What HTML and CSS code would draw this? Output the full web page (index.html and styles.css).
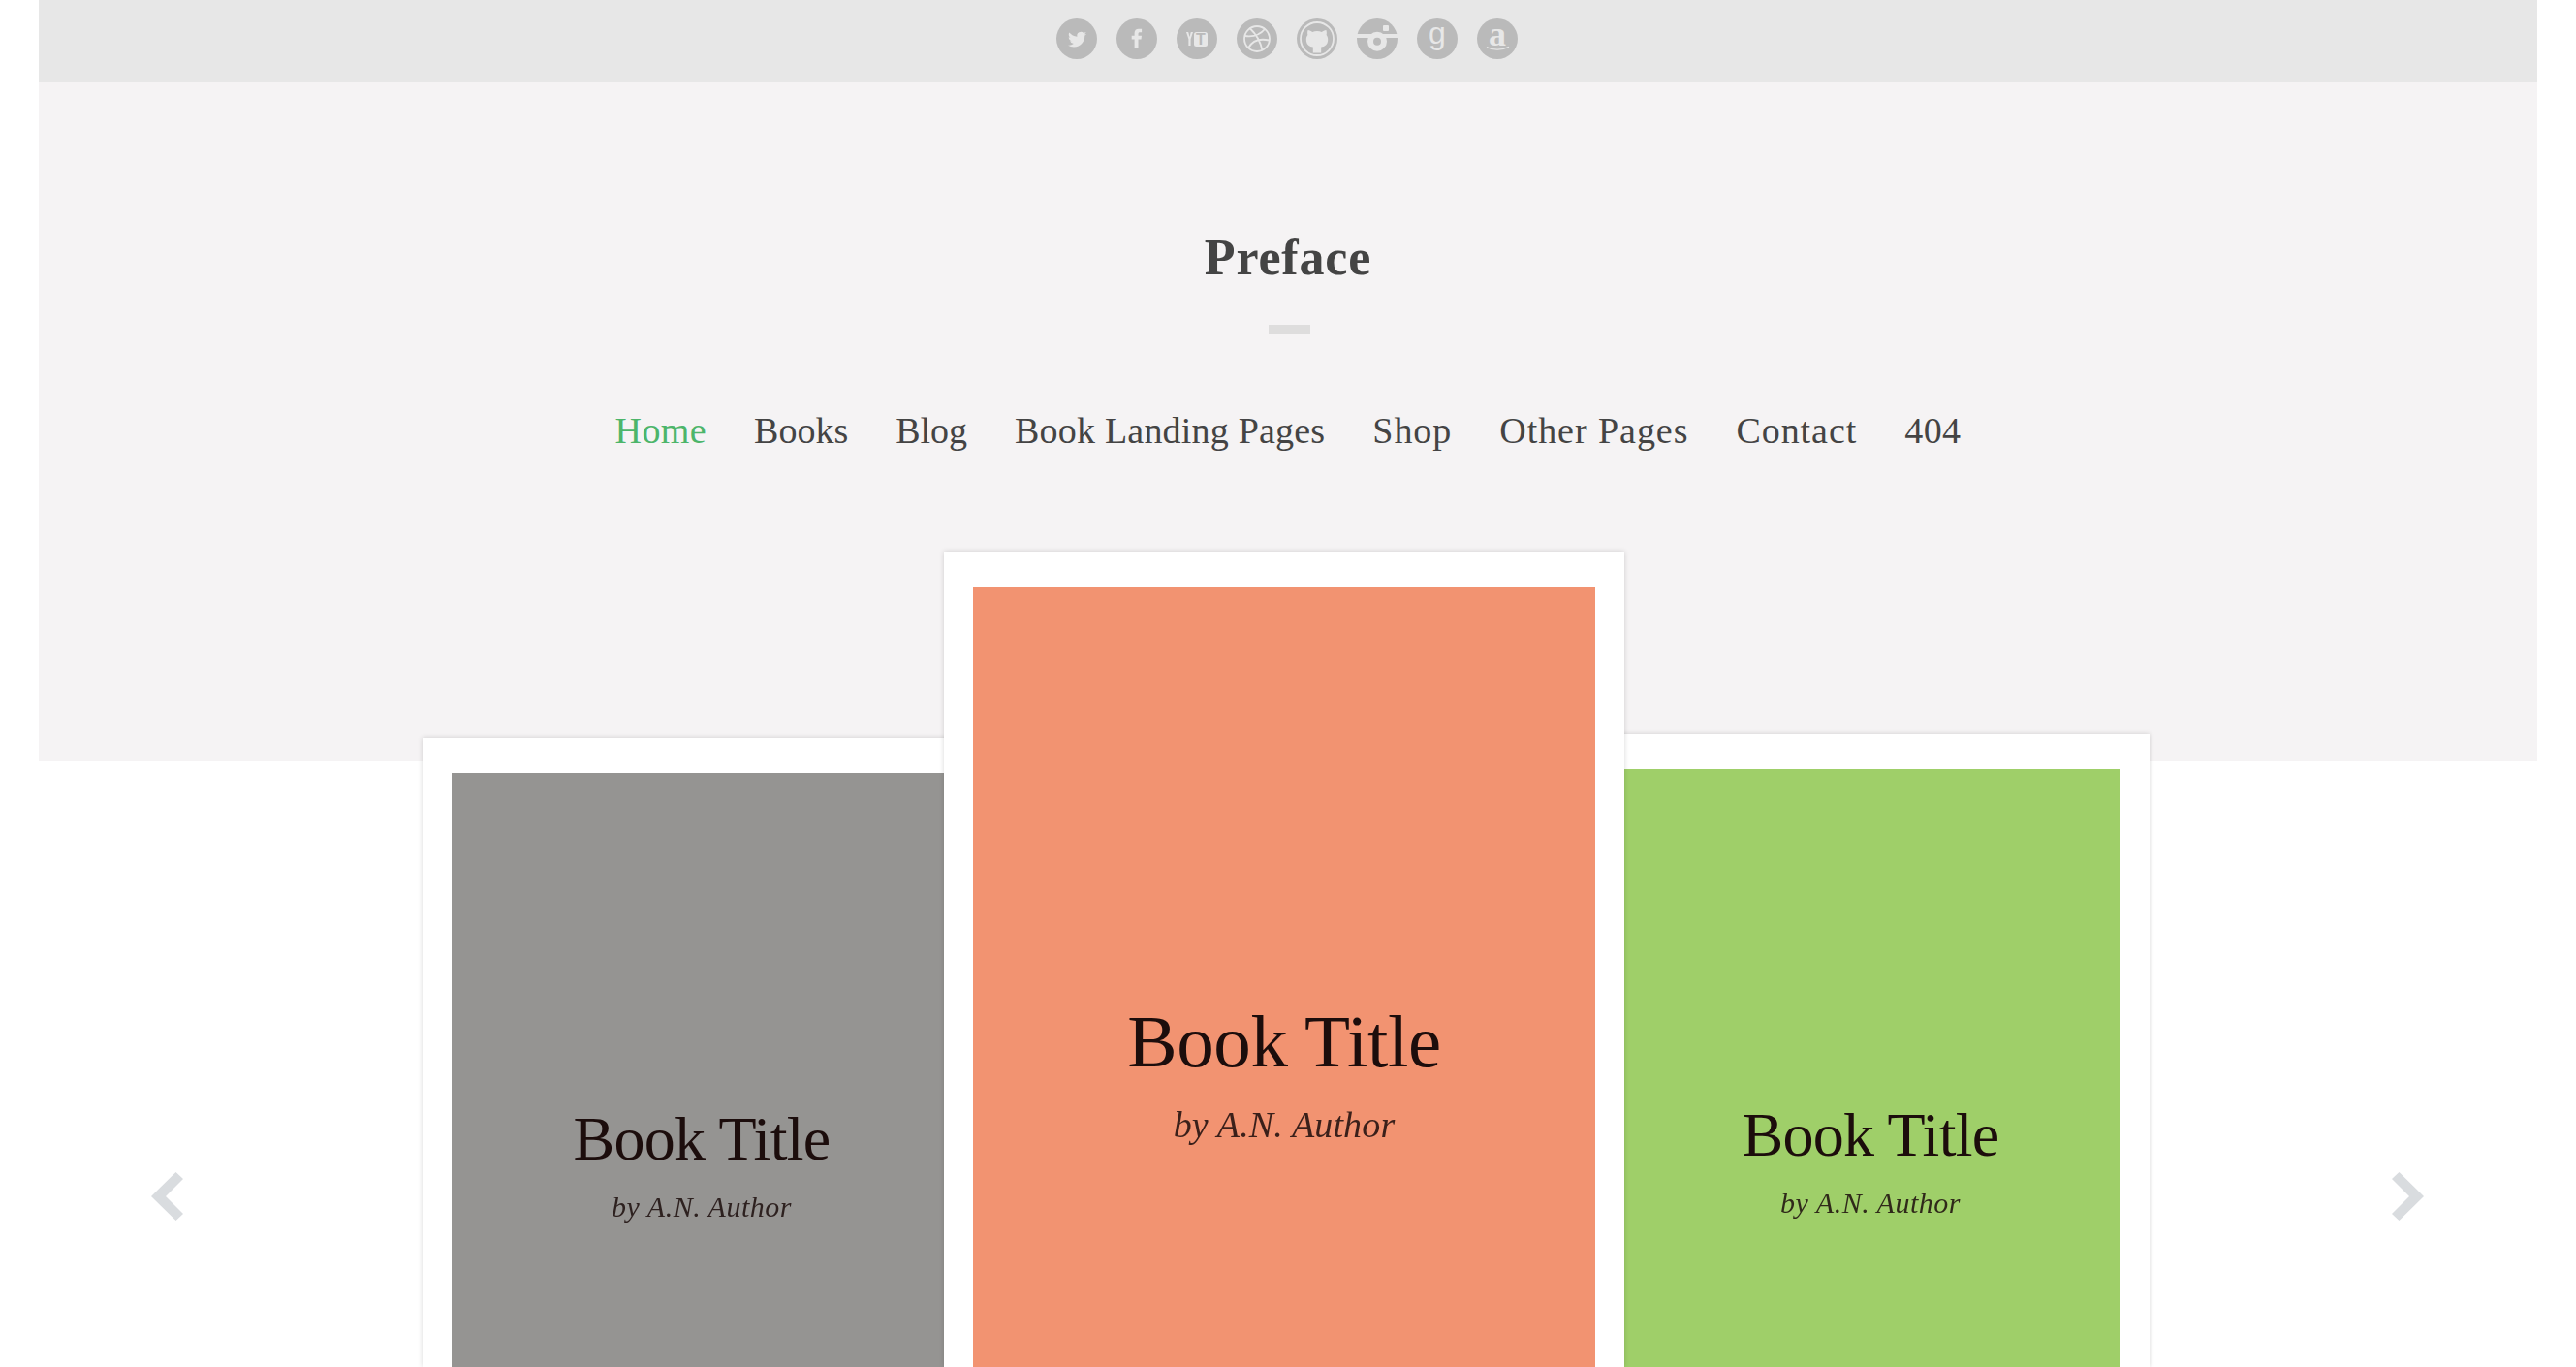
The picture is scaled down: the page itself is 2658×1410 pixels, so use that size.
FILE: index.html
```html
<!DOCTYPE html>
<html lang="en">
<head>
<meta charset="utf-8">
<title>Preface</title>
<link rel="stylesheet" href="styles.css">
</head>
<body>
<div class="shell">
  <div class="topbar">
    <svg class="social" viewBox="0 0 42 42"><circle class="disc" cx="21" cy="21" r="21"/><path class="mark" transform="translate(12 12) scale(.8)" d="M23.953 4.57a10 10 0 01-2.825.775 4.958 4.958 0 002.163-2.723c-.951.555-2.005.959-3.127 1.184a4.92 4.92 0 00-8.384 4.482C7.69 8.095 4.067 6.13 1.64 3.162a4.822 4.822 0 00-.666 2.475c0 1.71.87 3.213 2.188 4.096a4.904 4.904 0 01-2.228-.616v.06a4.923 4.923 0 003.946 4.827 4.996 4.996 0 01-2.212.085 4.936 4.936 0 004.604 3.417 9.867 9.867 0 01-6.102 2.105c-.39 0-.779-.023-1.17-.067a13.995 13.995 0 007.557 2.209c9.053 0 13.998-7.496 13.998-13.985 0-.21 0-.42-.015-.63A9.935 9.935 0 0024 4.59z"/></svg>
    <svg class="social" viewBox="0 0 42 42"><circle class="disc" cx="21" cy="21" r="21"/><path class="mark" d="M18.600 31v-9.400H15.700v-3.800h2.900v-2.700c0-3 1.700-4.400 4.300-4.400h3.200v3.600h-1.900c-1.300 0-1.700.6-1.700 1.600v1.900h3.500l-.5 3.800h-3v9.400z"/></svg>
    <svg class="social" viewBox="0 0 42 42"><circle class="disc" cx="21" cy="21" r="21"/><path class="mark" d="M10 14h2.200l1.300 5 1.300-5H17l-2.400 7.300V28h-2.200v-6.700z"/><rect class="mark" x="18" y="14" width="14" height="15" rx="2.500"/><text class="yt-t" x="25" y="27">T</text></svg>
    <svg class="social" viewBox="0 0 42 42"><circle class="disc" cx="21" cy="21" r="21"/><g class="line"><circle cx="21" cy="21" r="13"/><path d="M14 10.500c5 4.500 10 11 12.500 22.500M8.500 18c8 1.200 15-.3 21-7.500M12 30.500c3.500-6.500 10-10.500 21.500-8"/></g></svg>
    <svg class="social" viewBox="0 0 42 42"><circle class="disc" cx="21" cy="21" r="21"/><circle class="ring" cx="21" cy="21" r="17"/><path class="mark" d="M16.800 35.500v-5.900c-3.500-.5-7-2-7-8 0-1.900.7-3.400 1.600-4.600-.3-1-.5-2.700.2-5 1.800 0 3.400 1 4.500 2a14 14 0 0 1 9.800 0c1.100-1 2.700-2 4.500-2 .7 2.300.5 4 .2 5 .9 1.200 1.600 2.700 1.600 4.600 0 6-3.500 7.500-7 8v5.900z"/></svg>
    <svg class="social" viewBox="0 0 42 42"><circle class="disc" cx="21" cy="21" r="21"/><rect class="mark" x="0" y="16" width="42" height="4"/><rect class="mark" x="27" y="7" width="6" height="6" rx="1"/><circle class="mark" cx="21" cy="23.700" r="10"/><circle class="disc" cx="21" cy="23.700" r="4"/></svg>
    <svg class="social" viewBox="0 0 42 42"><circle class="disc" cx="21" cy="21" r="21"/><text class="glyph-g" x="21" y="26">g</text></svg>
    <svg class="social" viewBox="0 0 42 42"><circle class="disc" cx="21" cy="21" r="21"/><text class="glyph-a" x="21" y="28">a</text><path class="swoosh" d="M10 29.500c6 3.500 16 3.500 23-.3"/></svg>
  </div>
  <header class="hero">
    <h1 class="site-title">Preface</h1>
    <div class="rule"></div>
    <nav class="nav">
      <a class="nav-link nav-link-active">Home</a>
      <a class="nav-link nav-link-tight">Books</a>
      <a class="nav-link nav-link-tight">Blog</a>
      <a class="nav-link nav-link-snug">Book Landing Pages</a>
      <a class="nav-link nav-link-wide">Shop</a>
      <a class="nav-link nav-link-wide">Other Pages</a>
      <a class="nav-link nav-link-wide">Contact</a>
      <a class="nav-link">404</a>
    </nav>
  </header>
</div>
<section class="carousel">
  <article class="card card-left">
    <div class="cover cover-grey"><p class="book-title">Book Title</p><p class="book-author">by A.N. Author</p></div>
  </article>
  <article class="card card-center">
    <div class="cover cover-orange"><p class="book-title">Book Title</p><p class="book-author">by A.N. Author</p></div>
  </article>
  <article class="card card-right">
    <div class="cover cover-green"><p class="book-title">Book Title</p><p class="book-author">by A.N. Author</p></div>
  </article>
  <svg class="arrow arrow-prev" viewBox="0 0 33 50"><path d="M0 25 25.500 0 33 7 15 25 33 43 25.500 50z"/></svg>
  <svg class="arrow arrow-next" viewBox="0 0 33 50"><path d="M33 25 7.500 0 0 7 18 25 0 43 7.500 50z"/></svg>
</section>
</body>
</html>
```
FILE: styles.css
```css
html, body {
  margin: 0;
  height: 1410px;
  overflow: hidden;
  background: #fff;
  font-family: "Liberation Serif", serif;
  color: #444;
}
.shell { padding: 0 40px; }
.topbar {
  height: 85px;
  box-sizing: border-box;
  padding: 19px 2px 0 0;
  background: #e7e7e7;
  display: flex;
  justify-content: center;
  gap: 20px;
}
.social { width: 42px; height: 42px; display: block; overflow: visible; }
.disc { fill: #bababa; }
.mark { fill: #e7e7e7; }
.ring { fill: none; stroke: #e7e7e7; stroke-width: 1.8; }
.line { fill: none; stroke: #e7e7e7; stroke-width: 1.8; }
.swoosh { fill: none; stroke: #e7e7e7; stroke-width: 1.3; }
.yt-t { font: bold 16px "Liberation Sans", sans-serif; fill: #bababa; text-anchor: middle; }
.glyph-g { font: 32px "Liberation Sans", sans-serif; fill: #e7e7e7; text-anchor: middle; }
.glyph-a { font: bold 36px "Liberation Serif", serif; fill: #e7e7e7; text-anchor: middle; }
.hero {
  height: 700px;
  box-sizing: border-box;
  padding-top: 154.5px;
  background: #f5f3f4;
  display: flex;
  flex-direction: column;
  align-items: center;
}
.site-title {
  margin: 0;
  font-size: 52px;
  line-height: 1;
  font-weight: bold;
  letter-spacing: 0.85px;
  color: #444;
}
.rule {
  width: 43px;
  height: 10px;
  margin: 43.5px 0 0 2px;
  background: #dedddd;
}
.nav {
  margin-top: 80px;
  display: flex;
  gap: 49px;
}
.nav-link {
  font-size: 38px;
  line-height: 1;
  letter-spacing: 0.4px;
  color: #444;
}
.nav-link-active { color: #4cb56a; }
.nav-link-tight { letter-spacing: 0; }
.nav-link-snug { letter-spacing: 0.2px; }
.nav-link-wide { letter-spacing: 0.95px; }
.carousel {
  position: relative;
  margin-top: -216px;
  padding-left: 436px;
  display: flex;
  align-items: flex-start;
}
.card {
  box-sizing: border-box;
  padding: 36px 30px 0;
  background: #fff;
  box-shadow: 0 0 5px rgba(0, 0, 0, 0.16);
  flex: none;
}
.card-left { width: 576px; margin: 192px -38px 0 0; }
.card-center { width: 702px; position: relative; z-index: 1; }
.card-right { width: 576px; margin: 188px 0 0 -34px; }
.cover {
  box-sizing: border-box;
  text-align: center;
  padding-top: 346px;
  color: #1c0d0c;
}
.cover-grey { background: #959492; height: 613px; }
.cover-orange { background: #f29371; height: 805px; padding-top: 431px; }
.cover-green { background: #9fcf69; height: 617px; }
.book-title {
  margin: 0;
  font-size: 64px;
  line-height: 1;
  letter-spacing: -0.7px;
  filter: blur(0.5px);
}
.book-author {
  margin: 22.6px 0 0;
  font-size: 30px;
  line-height: 1;
  font-style: italic;
  letter-spacing: 0.5px;
  opacity: 0.85;
  filter: blur(0.4px);
}
.card-center .book-title { font-size: 77px; letter-spacing: -0.4px; }
.card-center .book-author { font-size: 38px; margin-top: 27.5px; letter-spacing: 0.15px; }
.arrow {
  position: absolute;
  top: 640px;
  width: 33px;
  height: 50px;
  fill: #d9dcdf;
}
.arrow-prev { left: 156px; }
.arrow-next { right: 157px; }
```
